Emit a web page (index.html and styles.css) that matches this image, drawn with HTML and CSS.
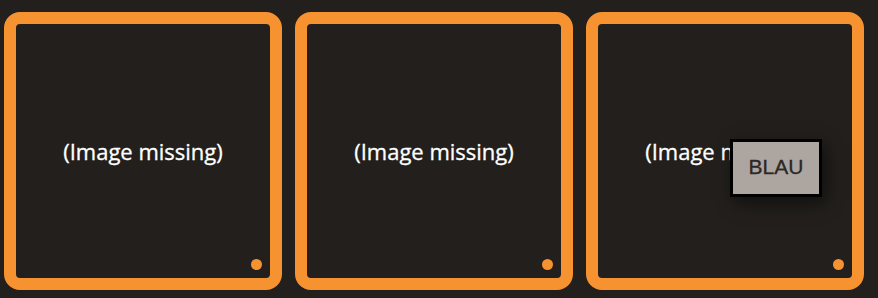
FILE: index.html
```html
<!DOCTYPE html>
<html>
<head>
<meta charset="utf-8">
<link rel="stylesheet" href="styles.css">
</head>
<body>
<div class="row">
  <div class="card">
    <span class="missing">(Image missing)</span>
    <span class="dot"></span>
  </div>
  <div class="card">
    <span class="missing">(Image missing)</span>
    <span class="dot"></span>
  </div>
  <div class="card">
    <span class="missing">(Image missing)</span>
    <span class="dot"></span>
    <div class="tooltip">BLAU</div>
  </div>
</div>
</body>
</html>
```
FILE: styles.css
```css
html, body {
  margin: 0;
  padding: 0;
  background: #221f1c;
}
body {
  width: 878px;
  height: 298px;
  overflow: hidden;
}
.row {
  display: flex;
  gap: 13px;
  padding: 12px 0 0 4px;
}
.card {
  position: relative;
  box-sizing: border-box;
  width: 278px;
  height: 278px;
  border: 12px solid #f79230;
  border-radius: 16px;
  background: #221f1c;
  display: flex;
  align-items: center;
  justify-content: center;
}
.missing {
  font-family: "Open Sans", "Noto Sans", sans-serif;
  font-size: 22px;
  line-height: 30px;
  color: #ffffff;
  -webkit-text-stroke: 0.3px #ffffff;
}
.dot {
  position: absolute;
  right: 8px;
  bottom: 8px;
  width: 11px;
  height: 11px;
  border-radius: 50%;
  background: #f79230;
}
.tooltip {
  position: absolute;
  left: 132px;
  top: 115px;
  box-sizing: border-box;
  width: 92px;
  height: 58px;
  padding-bottom: 3px;
  border: 3px solid #000000;
  background: #ada59f;
  color: #2b2826;
  font-family: "Liberation Sans", Arial, sans-serif;
  font-size: 21px;
  -webkit-text-stroke: 0.3px #2b2826;
  display: flex;
  align-items: center;
  justify-content: center;
  box-shadow: 4px 6px 16px rgba(0, 0, 0, 0.5);
}
```
